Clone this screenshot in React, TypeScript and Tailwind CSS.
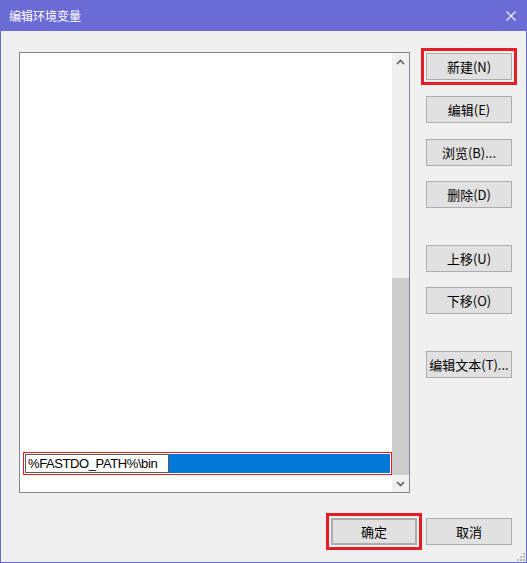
const cjk = "font-['Noto_Sans_CJK_SC','Liberation_Sans',sans-serif]"

function Btn({ label, className = "" }: { label: string; className?: string }) {
  return (
    <button
      className={`flex h-[27px] w-[86px] items-center justify-center border border-[#adadad] bg-[#e1e1e1] text-[13px] leading-none text-black ${className}`}
    >
      {label}
    </button>
  )
}

function Chevron({ up }: { up?: boolean }) {
  return (
    <svg width="9" height="6" viewBox="0 0 9 6" className={up ? "" : "rotate-180"}>
      <path d="M1 5 L4.5 1.5 L8 5" fill="none" stroke="#606060" strokeWidth="1.6" />
    </svg>
  )
}

export default function App() {
  return (
    <div className={`relative flex h-[563px] w-[527px] flex-col bg-[#6b6bd6] ${cjk}`}>
      {/* title bar */}
      <div className="flex h-[31px] items-center justify-between pl-[9px] pr-[11px] text-[12px] text-white">
        <span>编辑环境变量</span>
        <svg width="10" height="10" viewBox="0 0 10 10">
          <path d="M0.5 0.5 L9.5 9.5 M9.5 0.5 L0.5 9.5" stroke="white" strokeWidth="1.1" />
        </svg>
      </div>

      <div className="mx-[1px] mb-[1px] flex flex-1 flex-col bg-[#f0f0f0] pl-[18px] pt-[21px]">
        <div className="flex">
          {/* list box */}
          <div className="flex h-[441px] w-[391px] border border-[#828790] bg-white">
            <div className="flex flex-1 flex-col justify-end pb-[17px]">
              <div className="ml-[3px] flex h-[23px] border border-[#e81c24] p-[1px]">
                <div className="flex w-[144px] items-center border border-[#5a5a5a] bg-white pl-[2px] font-['Liberation_Sans',sans-serif] text-[13px] tracking-[-0.4px] text-black">
                  %FASTDO_PATH%\bin
                </div>
                <div className="flex-1 bg-[#0078d7]" />
              </div>
            </div>
            <div className="flex w-[17px] flex-col bg-[#f0f0f0]">
              <div className="flex h-[17px] items-center justify-center">
                <Chevron up />
              </div>
              <div className="flex flex-1 flex-col justify-end">
                <div className="h-[197px] bg-[#cdcdcd]" />
              </div>
              <div className="flex h-[17px] items-center justify-center">
                <Chevron />
              </div>
            </div>
          </div>

          {/* side buttons */}
          <div className="ml-[16px] flex flex-col pt-[1px]">
            <Btn label="新建(N)" className="outline-3 outline-offset-2 outline-[#e81c24]" />
            <Btn label="编辑(E)" className="mt-[16px]" />
            <Btn label="浏览(B)..." className="mt-[16px]" />
            <Btn label="删除(D)" className="mt-[15px]" />
            <Btn label="上移(U)" className="mt-[37px]" />
            <Btn label="下移(O)" className="mt-[15px]" />
            <Btn label="编辑文本(T)..." className="mt-[37px]" />
          </div>
        </div>

        {/* bottom buttons */}
        <div className="mt-[25px] flex justify-end gap-[9px] pr-[14px]">
          <Btn
            label="确定"
            className="border-2 border-[#0078d7] outline-3 outline-offset-2 outline-[#e81c24]"
          />
          <Btn label="取消" />
        </div>
      </div>

      {/* resize grip */}
      <svg width="10" height="10" viewBox="0 0 10 10" className="absolute bottom-[2px] right-[2px]">
        {[
          [8, 2],
          [5, 5],
          [8, 5],
          [2, 8],
          [5, 8],
          [8, 8],
        ].map(([x, y]) => (
          <rect key={`${x}-${y}`} x={x} y={y} width="2" height="2" fill="#b8b8b8" />
        ))}
      </svg>
    </div>
  )
}
